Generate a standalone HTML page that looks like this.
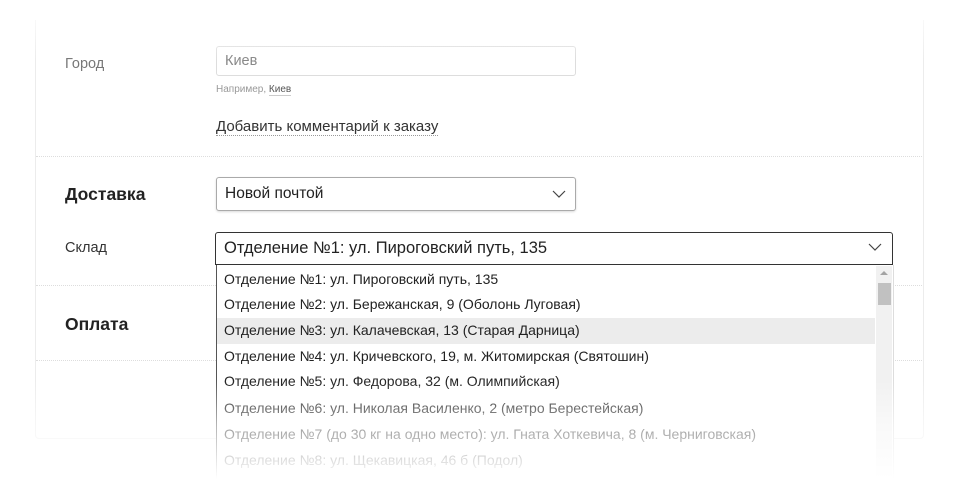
<!DOCTYPE html>
<html><head><meta charset="utf-8"><style>
body{margin:0;width:960px;height:490px;background:#fff;font-family:"Liberation Sans",sans-serif;position:relative;overflow:hidden}
.a{position:absolute}
.card{left:35px;top:20px;width:887px;height:418px;border:1px solid #ececec;border-top:none;border-radius:0 0 4px 4px}
.hr{left:36px;width:886px;border-top:1px dotted #ddd;height:0}
.lbl{font-size:14.5px;color:#333}
.sel{border:1px solid #aaa;border-radius:3px;box-sizing:border-box;font-size:15.5px;color:#222;padding-left:8px;line-height:30px;background:#fff}
.row{left:217px;width:658px;height:25.7px;line-height:25.7px;font-size:14px;padding-left:7px;box-sizing:border-box;color:#222;white-space:nowrap}
</style></head><body>
<div class="a card"></div>
<div class="a lbl" style="left:65px;top:56px;color:#777">Город</div>
<div class="a sel" style="left:216px;top:46px;width:360px;height:30px;line-height:28px;border-color:#ddd;color:#888;font-size:14.5px">Киев</div>
<div class="a" style="left:216px;top:84px;font-size:10px;color:#999">Например, <span style="color:#555;border-bottom:1px solid #ccc">Киев</span></div>
<div class="a" style="left:216px;top:119px;font-size:15px;color:#333;border-bottom:1px dotted #999;line-height:16px">Добавить комментарий к заказу</div>
<div class="a hr" style="top:156px"></div>
<div class="a" style="left:65px;top:184px;font-size:17.5px;font-weight:bold;color:#222">Доставка</div>
<div class="a sel" style="left:216px;top:177px;width:360px;height:34px;line-height:32px;box-shadow:0 1px 2px rgba(0,0,0,.15)">Новой почтой</div>
<svg class="a" style="left:552px;top:189px" width="14" height="10"><path d="M1 2l6 6 6-6" fill="none" stroke="#444" stroke-width="1.2"/></svg>
<div class="a lbl" style="left:65px;top:240px">Склад</div>
<div class="a hr" style="top:285px"></div>
<div class="a" style="left:65px;top:314px;font-size:17.5px;font-weight:bold;color:#222">Оплата</div>
<div class="a hr" style="top:360px"></div>
<div class="a sel" style="left:215px;top:232px;width:678px;height:33px;line-height:31px;border:1px solid #333;border-radius:3px 3px 0 0;font-size:16.5px">Отделение №1: ул. Пироговский путь, 135</div>
<svg class="a" style="left:868px;top:242px" width="14" height="10"><path d="M1 2l6 6 6-6" fill="none" stroke="#444" stroke-width="1.2"/></svg>
<div class="a" style="left:216px;top:265px;width:676px;height:225px;background:#fff;border-left:1px solid #555;border-right:1px solid #ddd"></div>
<div class="a" style="left:876px;top:266px;width:16px;height:224px;background:#f1f1f1"></div>
<svg class="a" style="left:879px;top:270px" width="10" height="6"><path d="M1 5l4-4 4 4z" fill="#a3a3a3"/></svg>
<div class="a" style="left:878px;top:283px;width:13px;height:22px;background:#c1c1c1"></div>
<div class="a row" style="top:267px">Отделение №1: ул. Пироговский путь, 135</div>
<div class="a row" style="top:292px">Отделение №2: ул. Бережанская, 9 (Оболонь Луговая)</div>
<div class="a row" style="top:318px;background:#ececec">Отделение №3: ул. Калачевская, 13 (Старая Дарница)</div>
<div class="a row" style="top:344px">Отделение №4: ул. Кричевского, 19, м. Житомирская (Святошин)</div>
<div class="a row" style="top:369px">Отделение №5: ул. Федорова, 32 (м. Олимпийская)</div>
<div class="a row" style="top:396px">Отделение №6: ул. Николая Василенко, 2 (метро Берестейская)</div>
<div class="a row" style="top:422px">Отделение №7 (до 30 кг на одно место): ул. Гната Хоткевича, 8 (м. Черниговская)</div>
<div class="a row" style="top:448px">Отделение №8: ул. Щекавицкая, 46 б (Подол)</div>
<div class="a" style="left:0;top:0;width:960px;height:60px;background:linear-gradient(#fff 0,rgba(255,255,255,0) 60px)"></div>
<div class="a" style="left:0;top:380px;width:960px;height:110px;background:linear-gradient(rgba(255,255,255,0),rgba(255,255,255,.55) 40%,#fff 90%)"></div>
</body></html>
